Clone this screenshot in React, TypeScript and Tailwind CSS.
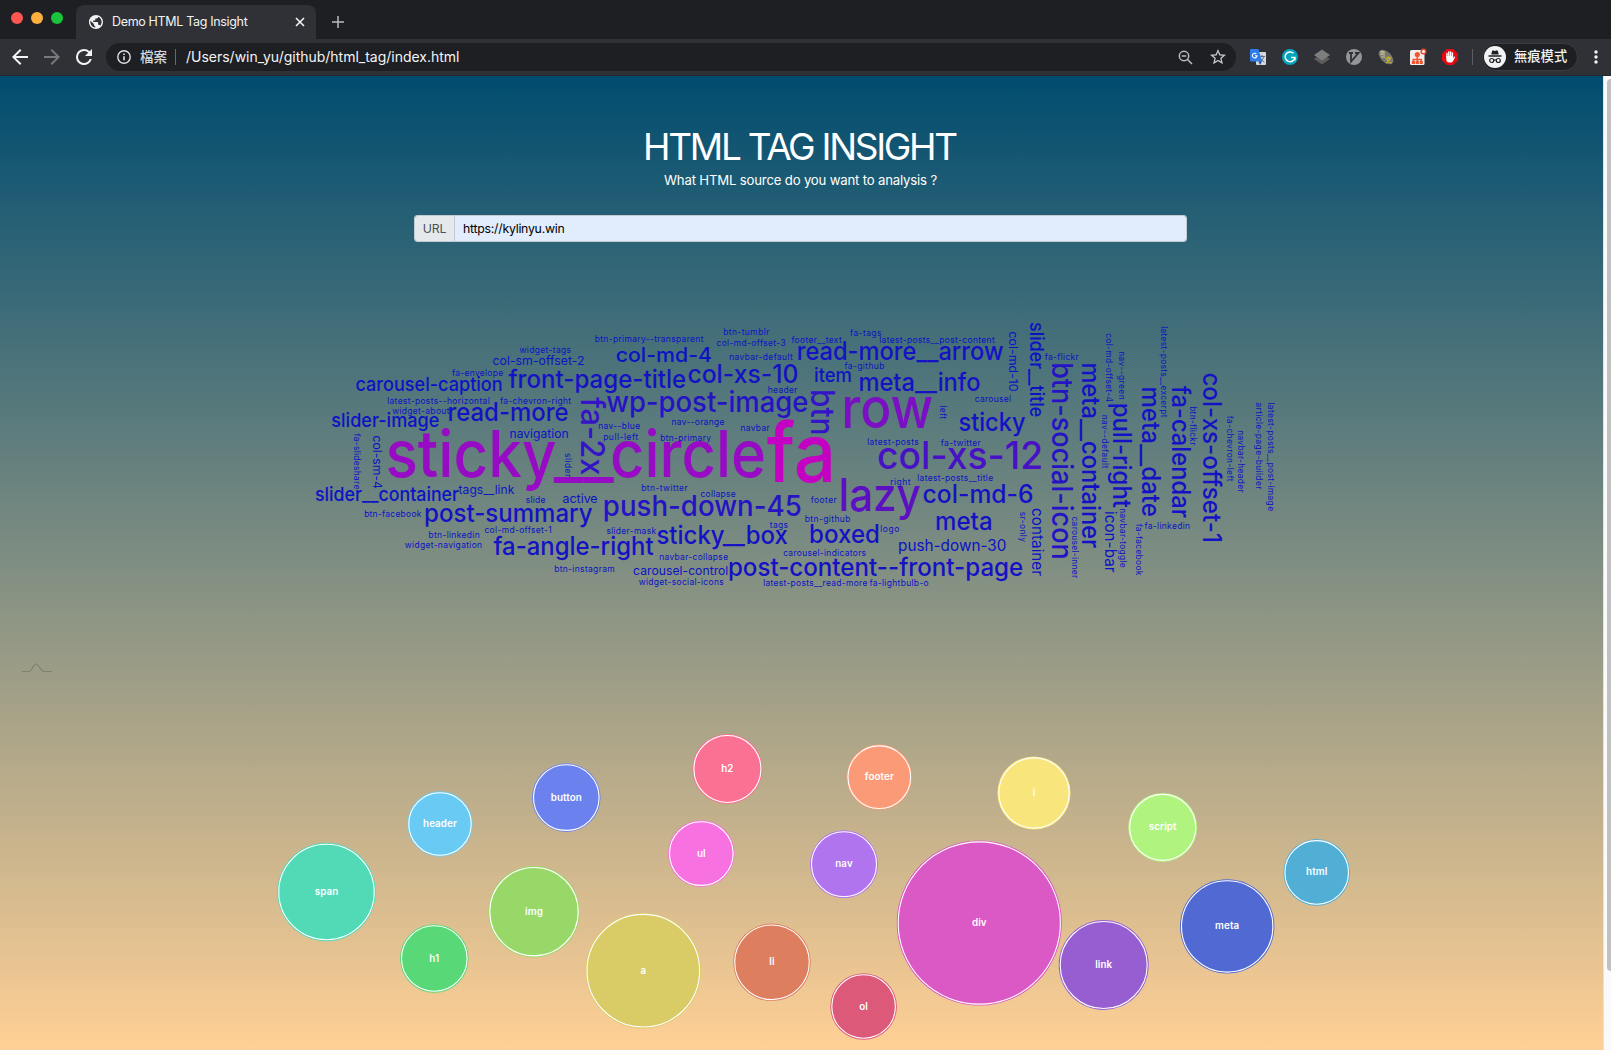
import React from "react";

type Word = [text: string, start: number, end: number, baseline: number, size: number];
type Bubble = [label: string, cx: number, cy: number, r: number, color: string];

const across: Word[] = [
  ["widget-tags", 520, 570.7, 353.3, 8.5],
  ["col-sm-offset-2", 493.3, 584, 365, 12.2],
  ["fa-envelope", 452.3, 502.7, 375.9, 8.5],
  ["carousel-caption", 356.7, 501.7, 391.3, 19.3],
  ["front-page-title", 509.3, 685, 388, 25],
  ["latest-posts--horizontal", 387.7, 489.3, 403.7, 8.5],
  ["fa-chevron-right", 500.3, 570.7, 403.7, 8.5],
  ["widget-about", 392.7, 449, 413.7, 8.5],
  ["read-more", 449, 567.3, 420.7, 25],
  ["slider-image", 332, 438.3, 426.7, 19.3],
  ["navigation", 510.3, 568, 438, 12.2],
  ["tags__link", 459, 513.7, 494, 12.2],
  ["slider__container", 315.7, 458, 501, 19.3],
  ["slide", 526, 545, 502.7, 8.5],
  ["active", 563.3, 597, 503, 12.2],
  ["btn-facebook", 364.7, 421, 516.7, 8.5],
  ["post-summary", 425.7, 591.3, 521.7, 25],
  ["col-md-offset-1", 485, 551.3, 532.7, 8.5],
  ["btn-linkedin", 429, 479.3, 537.7, 8.5],
  ["widget-navigation", 405.3, 481.7, 548, 8.5],
  ["fa-angle-right", 494.3, 652.3, 555, 25],
  ["btn-instagram", 554.7, 614.3, 571.7, 8.5],
  ["slider-mask", 606.7, 655.7, 533.7, 8.5],
  ["nav--blue", 598.7, 639.7, 429, 8.5],
  ["pull-left", 603.7, 637.7, 440, 8.5],
  ["btn-primary--transparent", 595.3, 703, 342, 8.5],
  ["col-md-4", 617, 711, 361.7, 20.3],
  ["btn-tumblr", 723.7, 769, 334.7, 8.5],
  ["col-md-offset-3", 717, 785.3, 345.7, 8.5],
  ["footer__text", 791.7, 841.3, 342.7, 8.5],
  ["fa-tags", 850.3, 881, 335.7, 8.5],
  ["latest-posts__post-content", 879.7, 994.3, 342.7, 8.5],
  ["navbar-default", 729.7, 792.3, 359.7, 8.5],
  ["read-more__arrow", 798.3, 1002.3, 360, 25],
  ["col-xs-10", 689, 797.3, 383.3, 25],
  ["item", 815.3, 851, 381.7, 19.3],
  ["fa-github", 844.7, 884, 368.7, 8.5],
  ["meta__info", 860, 979.3, 391, 25],
  ["header", 768.3, 797, 392.7, 8.5],
  ["wp-post-image", 608, 807, 411.7, 28.5],
  ["row", 845, 930.5, 427.7, 56],
  ["nav--orange", 672, 724, 425, 8.5],
  ["navbar", 741, 769.3, 430.7, 8.5],
  ["btn-primary", 660.7, 710.7, 441, 8.5],
  ["fa", 769.5, 832, 481.7, 82],
  ["latest-posts", 867.7, 918.3, 445, 8.5],
  ["col-xs-12", 879.5, 1041.3, 469.3, 38],
  ["btn-twitter", 641.7, 687.3, 490.7, 8.5],
  ["collapse", 701, 735.3, 496.7, 8.5],
  ["push-down-45", 604.7, 800.3, 515.7, 28.5],
  ["footer", 811, 836.3, 502.7, 8.5],
  ["lazy", 841.5, 918.5, 510.7, 45],
  ["right", 890.7, 910, 485, 8.5],
  ["latest-posts__title", 917.7, 992.7, 480.7, 8.5],
  ["fa-twitter", 941, 980.3, 445.7, 8.5],
  ["col-md-6", 924.2, 1032.3, 502.7, 25],
  ["btn-github", 805.3, 850, 521.7, 8.5],
  ["tags", 770, 787.7, 528, 8.5],
  ["sticky__box", 657.3, 786.7, 543.7, 25],
  ["boxed", 810.7, 878.7, 542.7, 25],
  ["logo", 880.7, 899, 532, 8.5],
  ["meta", 936.7, 991.3, 530, 25],
  ["navbar-collapse", 659.7, 727.7, 559.7, 8.5],
  ["carousel-indicators", 783.7, 865.7, 555.7, 8.5],
  ["push-down-30", 899, 1005.7, 551, 15.2],
  ["carousel-control", 633.9, 727.7, 575, 12.2],
  ["post-content--front-page", 729.5, 1022, 575.7, 25],
  ["widget-social-icons", 639.3, 723.3, 585, 8.5],
  ["latest-posts__read-more", 763.7, 867, 585.7, 8.5],
  ["fa-lightbulb-o", 869.7, 928.3, 585.7, 8.5],
  ["carousel", 975.3, 1010.7, 402, 8.5],
  ["sticky", 959.3, 1024.3, 430.7, 25],
  ["fa-flickr", 1045, 1078.3, 360, 8.5],
  ["fa-linkedin", 1144.7, 1189.7, 528.7, 8.5],
];

const down: Word[] = [
  ["fa-slideshare", 433.7, 489, 354, 8.5],
  ["col-sm-4", 436.3, 488.3, 373, 12.2],
  ["slider", 453.3, 476.7, 564.7, 8.5],
  ["fa-2x", 398.3, 474, 580.5, 32],
  ["btn", 391, 434, 810.5, 32],
  ["left", 406, 418.7, 940, 8.5],
  ["col-md-10", 332.3, 391, 1009, 12.2],
  ["slider__title", 322.7, 416.3, 1029.5, 19.3],
  ["btn-social-icon", 364, 558.3, 1052.2, 28.5],
  ["meta__container", 364, 547, 1082.2, 25],
  ["sr-only", 512, 541.7, 1019.7, 8.5],
  ["container", 509, 575.3, 1032, 15.2],
  ["carousel-inner", 517, 577.7, 1071.7, 8.5],
  ["col-md-offset-4", 333.7, 401.7, 1106, 8.5],
  ["nav--green", 351.7, 399.3, 1119, 8.5],
  ["pull-right", 404.3, 506.7, 1112.8, 25],
  ["nav--default", 415.3, 468, 1102, 8.5],
  ["meta__date", 388, 515.7, 1141.5, 25],
  ["latest-posts__excerpt", 326.7, 417, 1161, 8.5],
  ["fa-calendar", 386.7, 516.7, 1171.5, 25],
  ["btn-flickr", 406.7, 445, 1190, 8.5],
  ["col-xs-offset-1", 374, 541.7, 1202.8, 25],
  ["fa-chevron-left", 416, 481, 1227, 8.5],
  ["navbar-header", 430.7, 492.3, 1238, 8.5],
  ["article-page-builder", 403, 489, 1255.7, 8.5],
  ["latest-posts__post-image", 403, 510.7, 1268, 8.5],
  ["fa-facebook", 524, 575, 1136, 8.5],
  ["icon-bar", 512, 571.7, 1105, 15.2],
  ["navbar-toggle", 508.7, 567.3, 1120.2, 8.5],
];

const bubbles: Bubble[] = [
  ["span", 326.5, 892, 49.2, "#52dab6"],
  ["header", 440, 824, 32.7, "#69cbf3"],
  ["button", 566.3, 797.6, 34.3, "#6b82ee"],
  ["h1", 434.3, 958.5, 34.3, "#58d876"],
  ["img", 534, 911.7, 45.7, "#98d868"],
  ["a", 643.3, 970.7, 57.8, "#d9cb65"],
  ["h2", 727.4, 769, 35, "#fa7194"],
  ["ul", 701.3, 853.6, 33.3, "#f771e0"],
  ["footer", 879.3, 777.2, 32.8, "#fa9a76"],
  ["nav", 844, 864.2, 34, "#b074ee"],
  ["i", 1034, 793, 36.6, "#f8e67c"],
  ["li", 772, 962.3, 38.8, "#dd7e5f"],
  ["ol", 863.6, 1006.5, 33.3, "#dc597a"],
  ["div", 979.3, 923, 82.6, "#db59c5"],
  ["link", 1103.7, 965, 45, "#975ed2"],
  ["meta", 1227.2, 926.4, 47.2, "#5169d2"],
  ["script", 1162.7, 827.4, 34.5, "#b0f37e"],
  ["html", 1316.7, 872.4, 33.3, "#51afd6"],
];

function shade(size: number) {
  if (size > 80) return "#c400c2";
  if (size > 60) return "#980bc4";
  if (size > 50) return "#7a0fc4";
  if (size > 40) return "#5c10c2";
  if (size > 35) return "#4812c4";
  if (size > 30) return "#3414c6";
  if (size > 26) return "#2513c4";
  if (size > 22) return "#1412c4";
  return "#0c13c4";
}

function CloudWord({ word, vertical }: { word: Word; vertical?: boolean }) {
  const [text, start, end, baseline, size] = word;
  const bearing = /^[fst]/.test(text) ? size * 0.035 : size * 0.065;
  const from = start - bearing;
  const length = end - start + bearing + size * 0.05;
  return (
    <text
      fontSize={size}
      fontWeight={size < 18 ? 400 : 500}
      fill={shade(size)}
      textLength={length}
      lengthAdjust={size < 10 ? "spacing" : "spacingAndGlyphs"}
      transform={vertical ? `translate(${baseline} ${from}) rotate(90)` : `translate(${from} ${baseline})`}
    >
      {text}
    </text>
  );
}

function TabStrip() {
  return (
    <div className="flex h-[39px] items-end bg-[#1e1f22]">
      <div className="flex h-full w-[76px] items-center gap-2 pb-[3px] pl-[11px]">
        <span className="size-3 rounded-full bg-[#fc5652]" />
        <span className="size-3 rounded-full bg-[#fdb03d]" />
        <span className="size-3 rounded-full bg-[#17c43b]" />
      </div>
      <div className="flex h-[34px] w-[240px] items-center rounded-t-lg bg-[#303136] pr-[10px] pl-[13px]">
        <svg className="size-[14px] shrink-0" viewBox="2 2 20 20" fill="#f1f3f4">
          <path d="M12 2C6.480 2 2 6.480 2 12s4.480 10 10 10 10-4.480 10-10S17.520 2 12 2zm-1 17.930c-3.950-.49-7-3.850-7-7.930 0-.62.08-1.210.21-1.790L9 15v1c0 1.100.9 2 2 2v1.930zm6.900-2.540c-.26-.81-1-1.390-1.900-1.390h-1v-3c0-.55-.45-1-1-1H8v-2h2c.55 0 1-.45 1-1V7h2c1.100 0 2-.9 2-2v-.41c2.930 1.190 5 4.060 5 7.410 0 2.080-.8 3.970-2.100 5.390z" />
        </svg>
        <span className="ml-[9px] flex-1 text-[12.5px] tracking-[-0.33px] whitespace-nowrap text-[#f1f3f4]">Demo HTML Tag Insight</span>
        <svg className="size-3" viewBox="0 0 12 12" stroke="#f1f3f4" strokeWidth="1.6">
          <path d="M2 2l8 8M10 2l-8 8" />
        </svg>
      </div>
      <svg className="mb-[11px] ml-4 size-3" viewBox="0 0 12 12" stroke="#b8babd" strokeWidth="1.5">
        <path d="M6 0v12M0 6h12" />
      </svg>
    </div>
  );
}

function Extensions() {
  return (
    <div className="ml-[14px] flex items-center gap-4">
      <svg className="size-4" viewBox="0 0 16 16">
        <rect x="6" y="3" width="10" height="13" rx="1" fill="#d5d8dc" />
        <path d="M9 7.500h6M12 6v1.500M10 13c2-1.300 3.200-3 3.500-5.200M10.500 9c.8 1.800 2 3 3.800 4" stroke="#5b7486" fill="none" />
        <path d="M1 0h7.500L12 12.500H1a1 1 0 0 1-1-1V1a1 1 0 0 1 1-1z" fill="#2f7de9" />
        <path d="M8.500 12.500H12L10 16z" fill="#1853b5" />
        <path d="M6.400 5A2.300 2.300 0 1 0 7 6.700H4.900" stroke="#fff" strokeWidth="1.100" fill="none" />
      </svg>
      <svg className="size-4" viewBox="0 0 16 16">
        <circle cx="8" cy="8" r="8" fill="#06a3bd" />
        <path d="M11.500 4.300A4.900 4.900 0 1 0 12.900 8.500H9M12.900 8.500v2.900" stroke="#fff" strokeWidth="1.500" fill="none" />
      </svg>
      <svg className="size-4" viewBox="0 0 16 16">
        <path d="M8 4.500L16 10l-8 5.500L0 10z" fill="#5c5c5c" />
        <path d="M8 .5L16 6l-8 5.500L0 6z" fill="#7d7d7d" />
      </svg>
      <svg className="size-4" viewBox="0 0 16 16">
        <circle cx="8" cy="8" r="8" fill="#939598" />
        <path d="M3 4h4M5 4v8.500L12.500 4H9" stroke="#303136" strokeWidth="1.800" fill="none" />
      </svg>
      <svg className="size-4" viewBox="0 0 16 16">
        <ellipse cx="8" cy="8" rx="9" ry="5.200" transform="rotate(45 8 8)" fill="#77776f" />
        <path d="M2 3h4M4 1.500V6M2 6l3-1M3 8h4M6 2v5" stroke="#d0cc9b" strokeWidth=".9" fill="none" />
        <path d="M7.500 9h6M10.500 7.500V9M8 14c2-1 3.800-2.500 4.200-5M8.500 10c1 2 2.500 3.300 5 4" stroke="#d8bd26" strokeWidth="1.100" fill="none" />
      </svg>
      <svg className="size-4 overflow-visible" viewBox="0 0 16 16">
        <rect x="0" y="1" width="14.500" height="15" rx="1.500" fill="#f3eeec" />
        <circle cx="7.300" cy="5.500" r="2.600" fill="#f0562f" />
        <path d="M7.300 7v6M3.300 13v-2.500h8V13" stroke="#f0562f" strokeWidth="1.600" fill="none" />
        <path d="M1.800 12h3.200v3H1.800zM5.700 12h3.200v3H5.700zM9.600 12h3.200v3H9.600z" fill="#f0562f" />
        <circle cx="13.500" cy="2.500" r="2.300" fill="#fff" stroke="#f2431d" strokeWidth="1.500" />
      </svg>
      <svg className="size-4" viewBox="0 0 16 16">
        <path d="M4.700 0h6.600L16 4.700v6.600L11.300 16H4.700L0 11.300V4.700z" fill="#e50914" />
        <path d="M5 8V4.500M6.800 8V3M8.600 8V3M10.400 8V4" stroke="#fff" strokeWidth="1.400" strokeLinecap="round" />
        <path d="M4.300 7h6.800v2.200l1-1.400c.6-.5 1.200 0 .9.600L11 12.200c-.6.900-1.300 1.300-2.500 1.300H7.200c-1.700 0-2.900-1.300-2.900-3z" fill="#fff" />
      </svg>
    </div>
  );
}

function Toolbar() {
  return (
    <div className="flex h-[37px] items-center border-b border-[#26272b] bg-[#303136] pr-[13px] pl-[11px]">
      <svg className="size-[18px]" viewBox="3 3 18 18" fill="#f1f3f4">
        <path d="M20 11H7.830l5.590-5.590L12 4l-8 8 8 8 1.410-1.410L7.830 13H20v-2z" />
      </svg>
      <svg className="ml-[14px] size-[18px]" viewBox="3 3 18 18" fill="#77797d">
        <path d="M12 4l-1.410 1.410L16.170 11H4v2h12.170l-5.580 5.590L12 20l8-8z" />
      </svg>
      <svg className="ml-[14px] size-[18px]" viewBox="3 3 18 18" fill="#f1f3f4">
        <path d="M17.650 6.350A7.958 7.958 0 0 0 12 4a8 8 0 1 0 7.730 10h-2.080A6 6 0 1 1 12 6c1.660 0 3.140.69 4.220 1.780L13 11h7V4l-2.350 2.350z" />
      </svg>
      <div className="ml-[13px] flex h-7 w-[1130px] items-center rounded-full bg-[#1e1f22] pr-[10px] pl-[11px]">
        <svg className="size-[14px]" viewBox="0 0 14 14" fill="none" stroke="#dfe1e4" strokeWidth="1.400">
          <circle cx="7" cy="7" r="6.200" />
          <path d="M7 6.200v4M7 3.600v1.400" strokeWidth="1.600" />
        </svg>
        <span className="ml-[9px] text-[13.5px] font-medium text-[#d2d4d8]">檔案</span>
        <span className="mr-[10px] ml-2 h-4 w-px bg-[#66686c]" />
        <span className="flex-1 pb-px text-[14px] tracking-[-0.01px] whitespace-nowrap text-[#f3f4f5]">/Users/win_yu/github/html_tag/index.html</span>
        <svg className="size-[15px]" viewBox="0 0 15 15" fill="none" stroke="#b9bbbf" strokeWidth="1.500">
          <circle cx="6" cy="6" r="4.700" />
          <path d="M9.500 9.500l4.500 4.500M3.800 6h4.400" />
        </svg>
        <svg className="ml-[17px] size-4" viewBox="2 2 20 20" fill="#c6c8cb">
          <path d="M22 9.240l-7.190-.62L12 2 9.190 8.630 2 9.240l5.460 4.730L5.820 21 12 17.270 18.180 21l-1.630-7.030L22 9.240zM12 15.400l-3.760 2.270 1-4.280-3.320-2.880 4.380-.38L12 6.100l1.710 4.040 4.380.38-3.320 2.880 1 4.280L12 15.400z" />
        </svg>
      </div>
      <Extensions />
      <span className="ml-[14px] h-4 w-px bg-[#5c5e63]" />
      <div className="ml-[9px] flex h-7 w-24 items-center rounded-full border border-[#3b3c40] bg-[#1e1f22] pl-px">
        <svg className="size-[22px]" viewBox="0 0 22 22">
          <circle cx="11" cy="11" r="11" fill="#f1f3f4" />
          <path d="M7.200 8.500l1.100-4h1.400l1.300.5 1.300-.5h1.400l1.100 4zM4.500 9.300h13v1.400h-13z" fill="#202124" />
          <g fill="none" stroke="#202124" strokeWidth="1.200">
            <circle cx="7.700" cy="14.500" r="2" />
            <circle cx="14.300" cy="14.500" r="2" />
            <path d="M9.700 14.200q1.300-.7 2.600 0" />
          </g>
        </svg>
        <span className="ml-2 text-[13.300px] font-medium whitespace-nowrap text-[#f1f3f4]">無痕模式</span>
      </div>
      <svg className="ml-auto h-[14px] w-1" viewBox="0 0 4 14" fill="#f1f3f4">
        <circle cx="2" cy="2" r="1.700" />
        <circle cx="2" cy="7" r="1.700" />
        <circle cx="2" cy="12" r="1.700" />
      </svg>
    </div>
  );
}

export default function App() {
  return (
    <div className="flex h-[1050px] w-[1611px] flex-col overflow-hidden font-['Inter','Noto_Sans_CJK_TC',sans-serif]">
      <TabStrip />
      <Toolbar />
      <div className="flex h-[974px]">
        <main className="flex w-[1603px] flex-col bg-linear-to-b/srgb from-[#004c6f] to-[#ffd095]">
          <header className="flex flex-col items-center pr-0.5">
            <h1 className="mt-[48px] mr-0.5 text-[37px] leading-[46px] font-normal tracking-[-2.3px] whitespace-nowrap text-white">HTML TAG INSIGHT</h1>
            <p className="text-[13.2px] leading-5 tracking-[-0.19px] whitespace-nowrap text-white">What HTML source do you want to analysis ?</p>
            <div className="mt-[25px] flex h-[27px] w-[773px] overflow-hidden rounded-[3px] border border-[#c3cbd2] text-[12.300px] tracking-[-0.25px]">
              <span className="flex w-10 items-center justify-center border-r border-[#c3cbd2] bg-[#e6e9ec] pt-0.5 text-[#495057]">URL</span>
              <span className="flex flex-1 items-center bg-[#e1edfd] pt-0.5 pl-2 text-black">https://kylinyu.win</span>
            </div>
          </header>
          <svg className="h-[418px] w-[1603px] shrink-0" viewBox="0 242 1603 418">
            <text y={476.7} fontSize={65} fontWeight={500} fill={shade(65)}>
              <tspan x={385.5} textLength={171} lengthAdjust="spacingAndGlyphs">sticky</tspan>
              <tspan x={553.7} textLength={60} lengthAdjust="spacingAndGlyphs">__</tspan>
              <tspan x={610} textLength={156} lengthAdjust="spacingAndGlyphs">circle</tspan>
            </text>
            {across.map((w) => (
              <CloudWord key={w[0]} word={w} />
            ))}
            {down.map((w) => (
              <CloudWord key={w[0]} word={w} vertical />
            ))}
          </svg>
          <svg className="mt-[2px] ml-[22px] h-3 w-[30px] shrink-0" viewBox="0 0 30 12" fill="none" stroke="#7c806c" strokeWidth="1.2">
            <path d="M0 9.500h7c3 0 4-7.500 7-7.500s4.500 7.500 8 7.500h8" />
          </svg>
          <svg className="h-[376px] w-[1603px] shrink-0" viewBox="0 674 1603 376">
            {bubbles.map(([label, cx, cy, r, color]) => (
              <g key={label}>
                <circle cx={cx} cy={cy} r={r} fill={color} />
                <circle cx={cx} cy={cy} r={r - 1.500} fill="none" stroke="#fff" strokeWidth="1.1" />
                <text x={cx} y={cy + 3} textAnchor="middle" fontSize="9.800" fontWeight="600" letterSpacing=".1" fill="#fff">
                  {label}
                </text>
              </g>
            ))}
          </svg>
        </main>
        <div className="flex w-2 justify-end border-l border-[#e3e3e3] bg-[#fafafa] pt-[3px]">
          <span className="h-[892px] w-1 rounded-l-full bg-[#c1c1c1]" />
        </div>
      </div>
    </div>
  );
}
